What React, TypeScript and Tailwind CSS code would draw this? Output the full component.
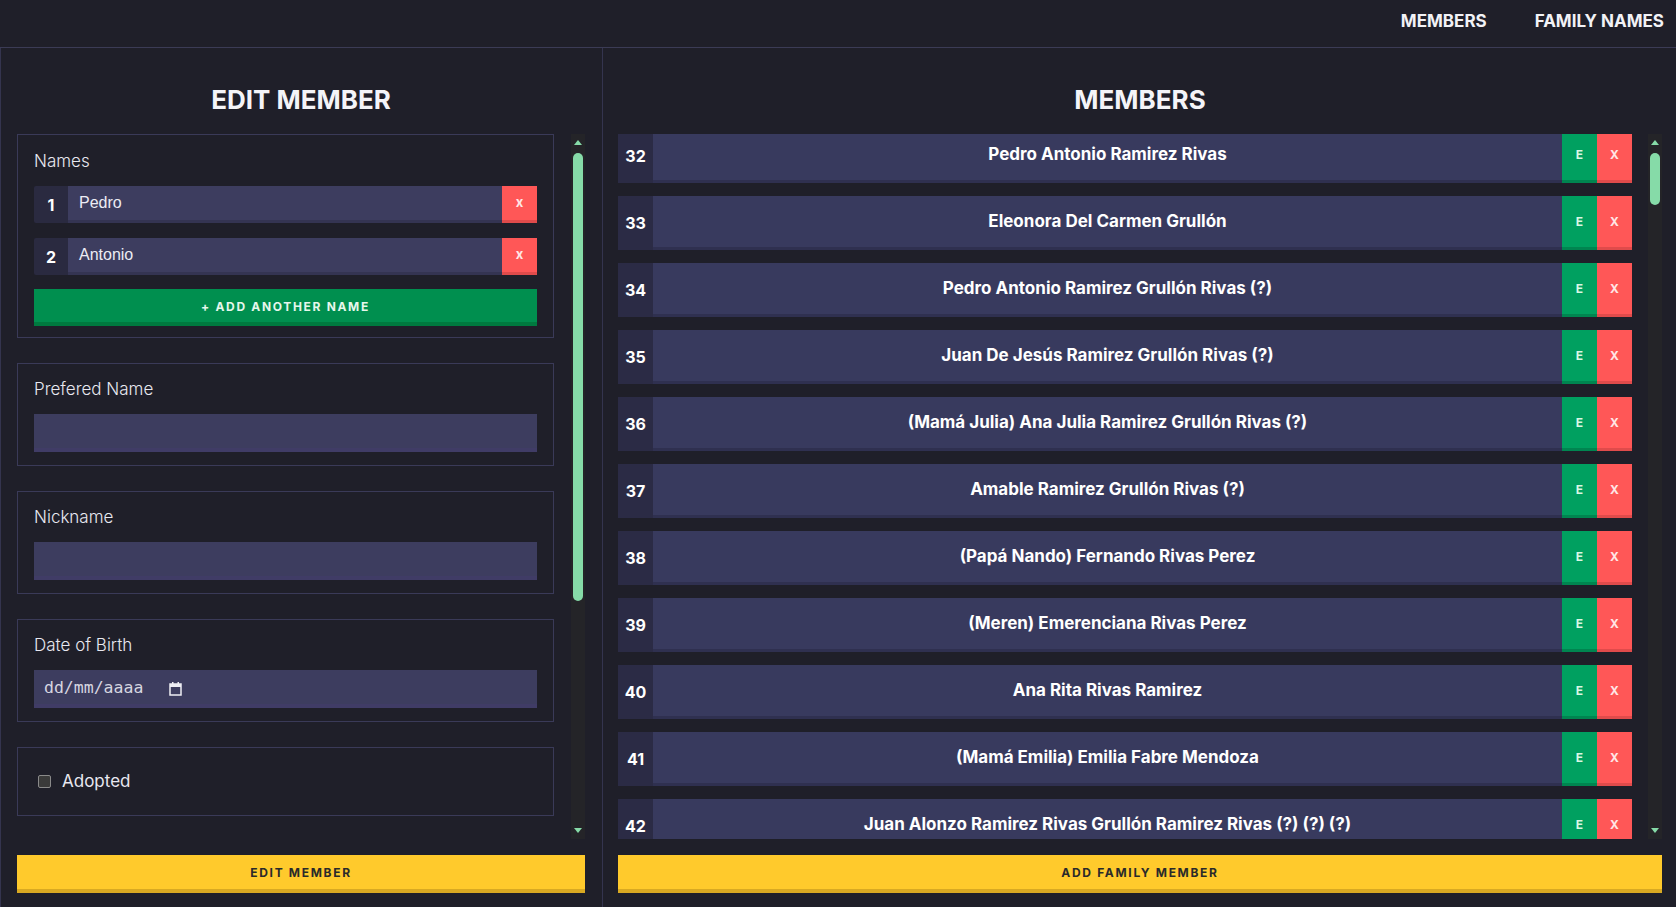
import React from "react";

const members: [number, string][] = [
  [32, "Pedro Antonio Ramirez Rivas"],
  [33, "Eleonora Del Carmen Grullón"],
  [34, "Pedro Antonio Ramirez Grullón Rivas (?)"],
  [35, "Juan De Jesús Ramirez Grullón Rivas (?)"],
  [36, "(Mamá Julia) Ana Julia Ramirez Grullón Rivas (?)"],
  [37, "Amable Ramirez Grullón Rivas (?)"],
  [38, "(Papá Nando) Fernando Rivas Perez"],
  [39, "(Meren) Emerenciana Rivas Perez"],
  [40, "Ana Rita Rivas Ramirez"],
  [41, "(Mamá Emilia) Emilia Fabre Mendoza"],
  [42, "Juan Alonzo Ramirez Rivas Grullón Ramirez Rivas (?) (?) (?)"],
];

const heading = { fontFamily: "Inter, 'Noto Sans', sans-serif" };

function Scrollbar({ thumbTop, thumbHeight }: { thumbTop: number; thumbHeight: number }) {
  return (
    <div className="relative w-[14px] flex-none bg-[#242428]">
      <svg className="absolute left-[3px] top-[5px]" width="8" height="6" viewBox="0 0 8 6">
        <path d="M0 6 L4 1 L8 6 Z" fill="#86dba8" />
      </svg>
      <div
        className="absolute left-[2px] w-[10px] rounded-full bg-[#86dba8]"
        style={{ top: thumbTop, height: thumbHeight }}
      />
      <svg className="absolute bottom-[5px] left-[3px]" width="8" height="6" viewBox="0 0 8 6">
        <path d="M0 0 L4 5 L8 0 Z" fill="#86dba8" />
      </svg>
    </div>
  );
}

function Card({ children, className = "" }: { children: React.ReactNode; className?: string }) {
  return (
    <div className={`border border-[#3a3a58] px-[16px] ${className}`}>{children}</div>
  );
}

function Label({ children }: { children: React.ReactNode }) {
  return (
    <div className="mb-[15px] h-[20px] text-[17px] leading-[20px] font-light text-[#e8e8f0]" style={heading}>
      {children}
    </div>
  );
}

function NameRow({ n, value }: { n: number; value: string }) {
  return (
    <div className="flex h-[37px]">
      <div
        className="flex w-[34px] items-center justify-center rounded-l-[2px] bg-[#2a2a40] text-[16px] font-bold text-white"
        style={heading}
      >
        {n}
      </div>
      <div
        className="flex flex-1 items-center border-b-[3px] border-[#343452] bg-[#3d3d5f] pl-[11px] text-[16px] text-[#ececf4]"
        style={{ fontFamily: "'Liberation Sans', Arial, sans-serif" }}
      >
        {value}
      </div>
      <button
        className="flex w-[35px] items-center justify-center border-b-[3px] border-[#e04b4b] bg-[#ff5757] text-[13px] font-bold text-[#ffe6e6]"
        style={heading}
      >
        x
      </button>
    </div>
  );
}

function EmptyInput() {
  return <div className="h-[38px] border-b-[4px] border-[#403c66] bg-[#3d3d5f]" />;
}

function MemberRow({ n, name }: { n: number; name: string }) {
  return (
    <div className="flex h-[54px] flex-none">
      <div
        className="flex w-[35px] items-center justify-center bg-[#2b2b45] text-[16px] font-bold text-white"
        style={heading}
      >
        {n}
      </div>
      <div
        className="flex flex-1 items-center justify-center border-b-[3px] border-[#2f3050] bg-[#383a5e] text-[17px] font-bold text-white"
        style={heading}
      >
        {name}
      </div>
      <button
        className="flex w-[35px] items-center justify-center border-b-[3px] border-[#008550] bg-[#00a060] text-[12px] font-bold text-[#d9f7e4]"
        style={heading}
      >
        E
      </button>
      <button
        className="flex w-[35px] items-center justify-center border-b-[3px] border-[#e04b4b] bg-[#ff5757] text-[12px] font-bold text-[#ffe6e6]"
        style={heading}
      >
        X
      </button>
    </div>
  );
}

function YellowButton({ children }: { children: React.ReactNode }) {
  return (
    <button
      className="h-[38px] w-full flex-none border-b-[4px] border-[#d9a922] bg-[#ffca2c] pt-[2px] text-[12px] font-bold tracking-[0.14em] text-[#2a2a2a]"
      style={heading}
    >
      {children}
    </button>
  );
}

export default function App() {
  return (
    <div className="flex h-[907px] w-full flex-col overflow-hidden bg-[#1f1f29] text-white">
      <header className="flex h-[48px] flex-none items-center justify-end gap-[48px] border-b border-[#3b3b55] pr-[12px] pb-[3px]">
        <a className="text-[17px] font-bold text-[#f2f2f6]" style={heading}>
          MEMBERS
        </a>
        <a className="text-[17px] font-bold text-[#f2f2f6]" style={heading}>
          FAMILY NAMES
        </a>
      </header>

      <main className="flex min-h-0 flex-1">
        {/* Edit member panel */}
        <section className="flex w-[603px] flex-none flex-col border-l border-r border-[#34344e] pl-[16px] pr-[17px]">
          <h1
            className="mt-[36px] mb-[18px] h-[32px] text-center text-[26px] leading-[32px] font-bold text-[#f4f4f8]"
            style={heading}
          >
            EDIT MEMBER
          </h1>
          <div className="flex h-[705px] flex-none gap-[17px]">
            <div className="flex flex-1 flex-col gap-[25px] overflow-hidden">
              <Card className="pt-[16px] pb-[11px]">
                <div className="mb-[1px]">
                  <Label>Names</Label>
                </div>
                <div className="flex flex-col gap-[15px]">
                  <NameRow n={1} value="Pedro" />
                  <NameRow n={2} value="Antonio" />
                  <button
                    className="-mt-[1px] h-[37px] border-b-[4px] border-[#00793f] bg-[#008f4f] pt-[2px] text-[12px] font-bold tracking-[0.14em] text-[#e6f7ec]"
                    style={heading}
                  >
                    + ADD ANOTHER NAME
                  </button>
                </div>
              </Card>
              <Card className="pt-[15px] pb-[13px]">
                <Label>Prefered Name</Label>
                <EmptyInput />
              </Card>
              <Card className="pt-[15px] pb-[13px]">
                <Label>Nickname</Label>
                <EmptyInput />
              </Card>
              <Card className="pt-[15px] pb-[13px]">
                <Label>Date of Birth</Label>
                <div className="flex h-[38px] items-center border-b-[4px] border-[#403c66] bg-[#3d3d5f] pl-[10px] pt-[3px]">
                  <span
                    className="text-[16.5px] text-[#d6d6e0]"
                    style={{ fontFamily: "'DejaVu Sans Mono', 'Liberation Mono', monospace" }}
                  >
                    dd/mm/aaaa
                  </span>
                  <svg className="ml-[26px]" width="13" height="14" viewBox="0 0 13 14">
                    <rect x="1" y="2" width="11" height="11" fill="none" stroke="#eeeef4" strokeWidth="1.5" />
                    <rect x="1" y="2" width="11" height="3" fill="#eeeef4" />
                    <rect x="3" y="0" width="1.5" height="3" fill="#eeeef4" />
                    <rect x="8.5" y="0" width="1.5" height="3" fill="#eeeef4" />
                  </svg>
                </div>
              </Card>
              <Card className="flex h-[69px] flex-none items-center">
                <div className="ml-[4px] h-[13px] w-[13px] rounded-[2px] border border-[#8a8a8a] bg-[#3a3a3a]" />
                <span className="ml-[11px] text-[17px] text-[#e8e8f0]" style={heading}>
                  Adopted
                </span>
              </Card>
            </div>
            <Scrollbar thumbTop={19} thumbHeight={448} />
          </div>
          <div className="mt-[16px]">
            <YellowButton>EDIT MEMBER</YellowButton>
          </div>
        </section>

        {/* Members list panel */}
        <section className="flex min-w-0 flex-1 flex-col pl-[15px] pr-[14px]">
          <h1
            className="mt-[36px] mb-[18px] h-[32px] text-center text-[26px] leading-[32px] font-bold text-[#f4f4f8]"
            style={heading}
          >
            MEMBERS
          </h1>
          <div className="flex h-[705px] flex-none gap-[16px]">
            <div className="flex-1 overflow-hidden">
              <div className="-mt-[5px] flex flex-col gap-[13px]">
                {members.map(([n, name]) => (
                  <MemberRow key={n} n={n} name={name} />
                ))}
              </div>
            </div>
            <Scrollbar thumbTop={19} thumbHeight={52} />
          </div>
          <div className="mt-[16px]">
            <YellowButton>ADD FAMILY MEMBER</YellowButton>
          </div>
        </section>
      </main>
    </div>
  );
}
